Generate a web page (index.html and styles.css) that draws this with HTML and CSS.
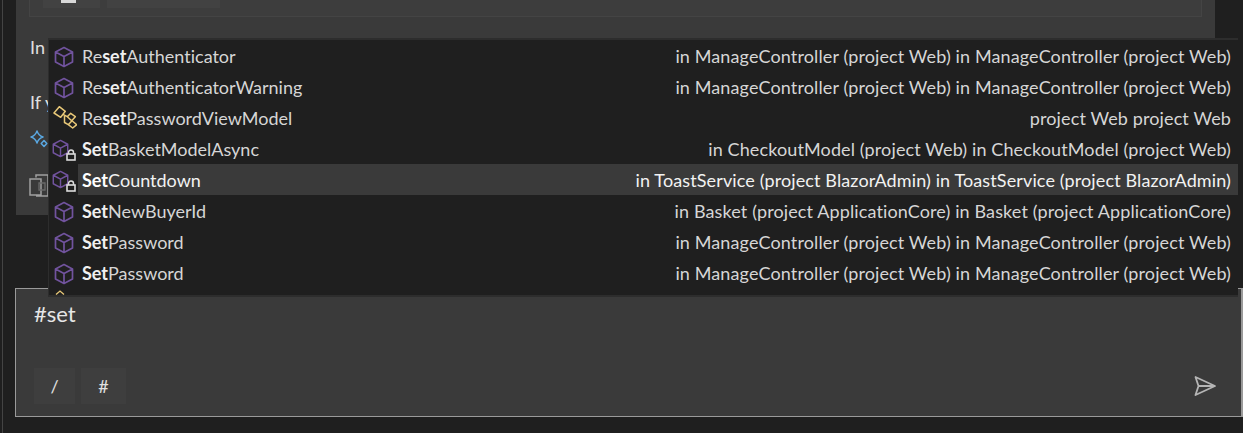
FILE: index.html
```html
<!DOCTYPE html>
<html lang="en">
<head>
<meta charset="utf-8">
<title>Chat</title>
<link rel="stylesheet" href="styles.css">
</head>
<body>
<svg class="defs" width="0" height="0" aria-hidden="true">
  <symbol id="cube" viewBox="0 0 20 22"><path d="M10 1.500 18.500 6v10L10 20.500 1.500 16V6Z M1.500 6 10 10.500 18.500 6 M10 10.500V20.500" fill="none" stroke="#71539e" stroke-width="1.700" stroke-linejoin="round"/></symbol>
  <symbol id="lock" viewBox="0 0 10 12"><path d="M2.500 5V3.500a2.500 2.500 0 0 1 5 0V5" fill="none" stroke="#dcdcdc" stroke-width="1.500"/><rect x="1" y="5" width="8" height="6" fill="#1f1f1f" stroke="#dcdcdc" stroke-width="1.600"/></symbol>
</svg>
<div class="app">
  <aside class="rail"></aside>
  <main class="main">
    <div class="top">
      <section class="panel">
        <div class="card">
          <div class="card-buttons">
            <span class="card-btn card-btn-sm"><i class="stub"></i></span>
            <span class="card-btn card-btn-lg"></span>
          </div>
        </div>
        <p class="line line-a">In</p>
        <p class="line line-b">If y</p>
        <svg class="sparkle" viewBox="0 0 18 18" width="18" height="18"><path d="M7 1C8 4 10 6 13 7 10 8 8 10 7 13 6 10 4 8 1 7 4 6 6 4 7 1Z M14 10.500 16.800 13.500 14 16.500 11.200 13.500Z" fill="none" stroke="#5aa7e0" stroke-width="1.500" stroke-linejoin="round"/></svg>
        <svg class="copy" viewBox="0 0 20 23" width="20" height="23"><path d="M7 3.500V1h12v21H7 M1 5h11v16H1Z" fill="none" stroke="#a0a0a0" stroke-width="1.500"/><path d="M10 9h6v7h-6Z" fill="none" stroke="#6a6a6a" stroke-width="1.300"/></svg>
      </section>
      <div class="scroll"></div>
    </div>
    <section class="input">
      <div class="typed">#set</div>
      <div class="input-foot">
        <div class="chips">
          <span class="chip chip-a">/</span>
          <span class="chip chip-b">#</span>
        </div>
        <svg class="send" viewBox="0 0 24 22" width="24" height="22"><path d="M2.500 2 22 11 2.500 20 5.500 11Z M5.500 11H22" fill="none" stroke="#b5b5b5" stroke-width="1.800" stroke-linejoin="round"/></svg>
      </div>
    </section>
  </main>
</div>

<ul class="popup">
  <li class="row"><span class="ico"><svg class="cube"><use href="#cube"/></svg></span><span class="name">Re<b>set</b>Authenticator</span><span class="where">in ManageController (project Web) in ManageController (project Web)</span></li>
  <li class="row"><span class="ico"><svg class="cube"><use href="#cube"/></svg></span><span class="name">Re<b>set</b>AuthenticatorWarning</span><span class="where">in ManageController (project Web) in ManageController (project Web)</span></li>
  <li class="row"><span class="ico"><svg class="cls" viewBox="0 0 25 25" width="25" height="25"><path d="M7.300 .7 13.300 5.300 8.700 11.300 2 7Z M18.700 7.300 23.300 10.700 19.700 14.700 15.300 10.700Z M20 14.700 24.700 18.700 20.700 22 16.300 18.700Z M11 8.300 15.300 10.700 M12.500 10 12.500 16.500 16.300 18.700" fill="none" stroke="#e8c878" stroke-width="1.500" stroke-linejoin="round"/></svg></span><span class="name">Re<b>set</b>PasswordViewModel</span><span class="where">project Web project Web</span></li>
  <li class="row"><span class="ico"><svg class="cube cube-sm"><use href="#cube"/></svg><svg class="lock"><use href="#lock"/></svg></span><span class="name"><b>Set</b>BasketModelAsync</span><span class="where">in CheckoutModel (project Web) in CheckoutModel (project Web)</span></li>
  <li class="row row-on"><span class="ico"><svg class="cube cube-sm"><use href="#cube"/></svg><svg class="lock"><use href="#lock"/></svg></span><span class="name"><b>Set</b>Countdown</span><span class="where">in ToastService (project BlazorAdmin) in ToastService (project BlazorAdmin)</span></li>
  <li class="row"><span class="ico"><svg class="cube"><use href="#cube"/></svg></span><span class="name"><b>Set</b>NewBuyerId</span><span class="where">in Basket (project ApplicationCore) in Basket (project ApplicationCore)</span></li>
  <li class="row"><span class="ico"><svg class="cube"><use href="#cube"/></svg></span><span class="name"><b>Set</b>Password</span><span class="where">in ManageController (project Web) in ManageController (project Web)</span></li>
  <li class="row"><span class="ico"><svg class="cube"><use href="#cube"/></svg></span><span class="name"><b>Set</b>Password</span><span class="where">in ManageController (project Web) in ManageController (project Web)</span></li>
  <li class="peek"><svg viewBox="0 0 10 5" width="10" height="5"><path d="M1 4.500 5 1l4 3.500" fill="none" stroke="#e8c878" stroke-width="1.300"/></svg></li>
</ul>
</body>
</html>
```
FILE: styles.css
```css
* { box-sizing: border-box; }
html, body { margin: 0; height: 100%; }
body {
  background: #1f1f1f;
  color: #e0e0e0;
  font-family: "Lato", "Open Sans", sans-serif;
  font-size: 18px;
  font-variant-ligatures: none;
  overflow: hidden;
  position: relative;
}
.defs { position: absolute; }
.app { display: flex; height: 433px; }
.rail {
  width: 15px;
  flex: none;
  border-left: 1px solid #444;
  margin-left: 2px;
  margin-right: -2px;
}
.main { flex: 1; min-width: 0; display: flex; flex-direction: column; }
.top { display: flex; height: 288px; padding-left: 1px; }
.panel {
  width: 1199px;
  height: 215px;
  background: #3a3a3a;
  padding: 0 13px;
  position: relative;
}
.card {
  height: 17px;
  background: #3d3d3d;
  border: 1px solid #444;
  border-top: 0;
  padding-left: 13px;
}
.card-buttons { display: flex; gap: 7px; }
.card-btn { height: 8px; background: #424242; display: block; }
.card-btn-sm { width: 57px; padding-left: 18px; }
.card-btn-lg { width: 113px; }
.stub { display: block; width: 15px; height: 3px; background: #d8d8d8; }
.line { margin: 0; position: absolute; left: 14px; line-height: 22px; }
.line-a { top: 36px; }
.line-b { top: 91px; }
.sparkle { position: absolute; left: 14px; top: 130px; }
.copy { position: absolute; left: 13px; top: 174px; }
.scroll { width: 14px; height: 38px; background: #1f1f1f; }
.input {
  height: 129px;
  background: #3a3a3a;
  border: 1px solid #9a9a9a;
  border-right-width: 2px;
  padding: 0 24px 0 18px;
  display: flex;
  flex-direction: column;
  justify-content: space-between;
}
.typed { font-size: 22px; line-height: 26px; margin-top: 12px; color: #e6e6e6; }
.input-foot { display: flex; justify-content: space-between; align-items: center; padding-bottom: 12px; }
.chips { display: flex; gap: 6px; }
.chip {
  height: 36px;
  background: #3e3e3e;
  display: flex;
  align-items: center;
  justify-content: center;
}
.chip-a { width: 41px; }
.chip-b { width: 45px; }
.popup {
  list-style: none;
  margin: 0;
  padding: 0;
  position: absolute;
  left: 48px;
  top: 38px;
  width: 1190px;
  height: 259px;
  background: #1f1f1f;
  border: 2px solid #2d2d2d;
  border-width: 2px 0 2px 1px;
  overflow: hidden;
}
.row {
  height: 31px;
  display: flex;
  align-items: center;
  padding-right: 7px;
  position: relative;
  white-space: nowrap;
}
.row-on::before {
  content: "";
  position: absolute;
  left: 29px;
  right: 0;
  top: 0;
  bottom: 0;
  background: #3a3a3a;
}
.ico { width: 33px; height: 31px; flex: none; position: relative; }
.cube { position: absolute; left: 5px; top: 6px; width: 20px; height: 22px; }
.cube-sm { left: 3px; top: 6px; width: 17px; height: 19px; }
.lock { position: absolute; left: 17px; top: 16px; width: 10px; height: 12px; }
.cls { position: absolute; left: 3px; top: 4px; }
.name { flex: 1; position: relative; color: #d6d6d6; }
.name b { font-weight: 700; color: #f0f0f0; }
.where { position: relative; color: #d6d6d6; letter-spacing: .12px; }
.row-on .name, .row-on .where { color: #f2f2f2; }
.row-on .name b { color: #fff; }
.peek { height: 10px; padding-left: 6px; line-height: 0; }
```
